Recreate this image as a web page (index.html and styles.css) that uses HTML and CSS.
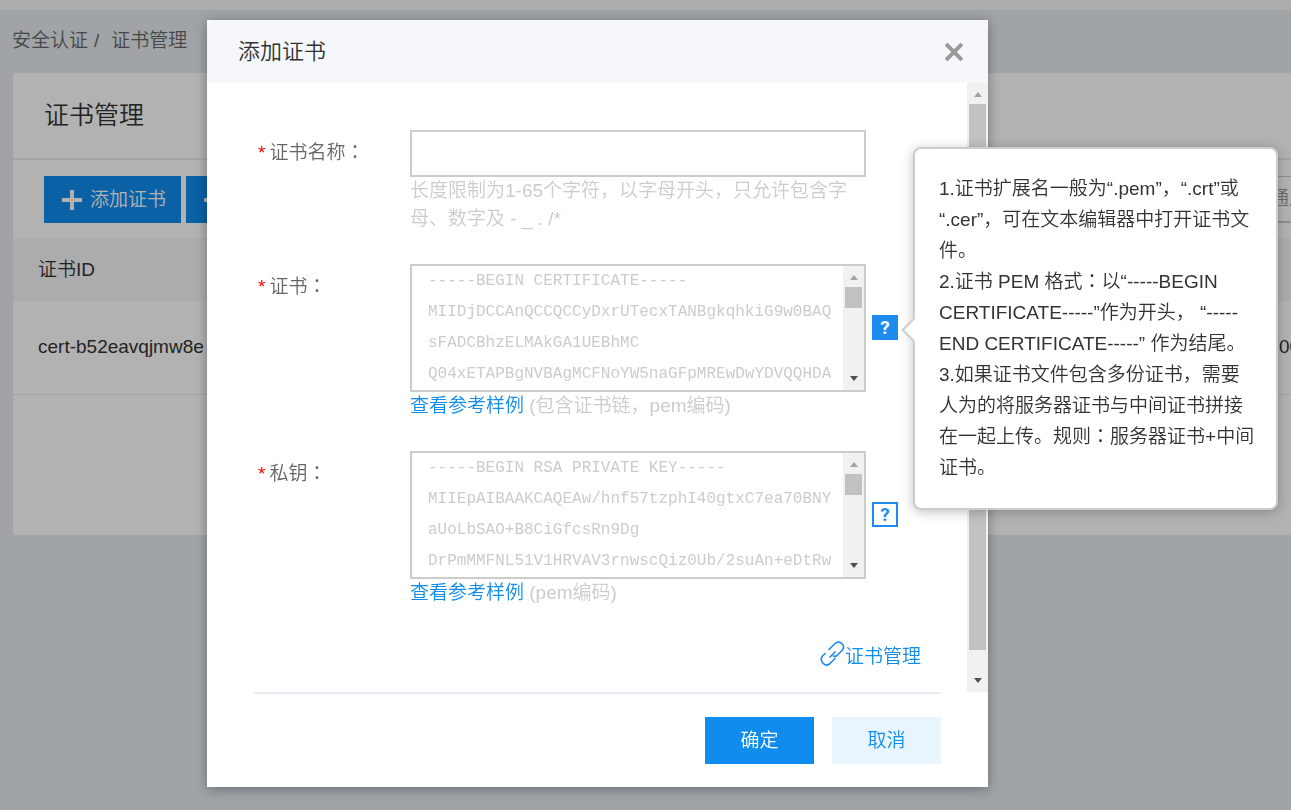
FILE: index.html
```html
<!DOCTYPE html>
<html lang="zh-CN">
<head>
<meta charset="utf-8">
<title>证书管理</title>
<link rel="stylesheet" href="styles.css">
</head>
<body>
<div class="page">
  <div class="topbar"></div>
  <nav class="crumbs"><span>安全认证</span><span>/</span><span>证书管理</span></nav>
  <main class="card">
    <h1 class="card-title">证书管理</h1>
    <div class="toolbar">
      <button class="tool-btn" type="button"><svg width="20" height="20" viewBox="0 0 20 20"><path d="M0 10H20M10 0V20"/></svg>添加证书</button>
      <button class="tool-btn" type="button"><svg width="20" height="20" viewBox="0 0 20 20"><path d="M0 10H20M10 0V20"/></svg></button>
      <button class="filter" type="button">通用</button>
    </div>
    <table class="certs">
      <thead><tr><th>证书ID</th><th class="last"></th></tr></thead>
      <tbody><tr><td>cert-b52eavqjmw8e</td><td class="last">00</td></tr></tbody>
    </table>
  </main>
</div>

<div class="overlay">
  <section class="dialog" role="dialog" aria-labelledby="dialog-title">
    <header class="dialog-head">
      <h2 id="dialog-title">添加证书</h2>
      <button class="close" type="button" aria-label="关闭"><svg width="18" height="18" viewBox="0 0 18 18"><path d="M1 1L17 17M17 1L1 17"/></svg></button>
    </header>
    <div class="dialog-body">
      <form class="form">
        <div class="row">
          <label for="cert-name"><i>*</i>证书名称<span lang="zh-TW">：</span></label>
          <div class="field">
            <input id="cert-name" class="text" type="text">
            <p class="hint name-hint">长度限制为1-65个字符，以字母开头，只允许包含字母、数字及 - _ . /*</p>
          </div>
        </div>
        <div class="row">
          <label for="cert-body"><i>*</i>证书<span lang="zh-TW">：</span></label>
          <div class="field">
            <div class="area">
              <textarea id="cert-body" placeholder="-----BEGIN CERTIFICATE-----
MIIDjDCCAnQCCQCCyDxrUTecxTANBgkqhkiG9w0BAQ
sFADCBhzELMAkGA1UEBhMC
Q04xETAPBgNVBAgMCFNoYW5naGFpMREwDwYDVQQHDA"></textarea>
              <div class="bar"><span class="up"></span><span class="thumb"></span><span class="down"></span></div>
            </div>
            <p class="hint"><a href="#">查看参考样例</a> (包含证书链，pem编码)</p>
          </div>
          <div class="help-wrap">
            <button class="help active" type="button">?</button>
            <div class="tip" role="tooltip">
              <p>1.证书扩展名一般为“.pem”，“.crt”或“.cer”，可在文本编辑器中打开证书文件。</p>
              <p>2.证书 PEM 格式<span lang="zh-TW">：</span>以“-----BEGIN<br>CERTIFICATE-----”作为开头， “-----<br>END CERTIFICATE-----” 作为结尾。</p>
              <p>3.如果证书文件包含多份证书，需要人为的将服务器证书与中间证书拼接在一起上传。规则<span lang="zh-TW">：</span>服务器证书+中间证书。</p>
            </div>
          </div>
        </div>
        <div class="row">
          <label for="cert-key"><i>*</i>私钥<span lang="zh-TW">：</span></label>
          <div class="field">
            <div class="area">
              <textarea id="cert-key" placeholder="-----BEGIN RSA PRIVATE KEY-----
MIIEpAIBAAKCAQEAw/hnf57tzphI40gtxC7ea70BNY
aUoLbSAO+B8CiGfcsRn9Dg
DrPmMMFNL51V1HRVAV3rnwscQiz0Ub/2suAn+eDtRw"></textarea>
              <div class="bar"><span class="up"></span><span class="thumb"></span><span class="down"></span></div>
            </div>
            <p class="hint"><a href="#">查看参考样例</a> (pem编码)</p>
          </div>
          <div class="help-wrap"><button class="help" type="button">?</button></div>
        </div>
        <a class="manage" href="#"><svg width="25" height="26" viewBox="0 0 25 26"><path d="M8.500 9L15 2.500C19 -1 26 3.500 22.500 9L17 14.500Q15 16 13 14.800M5.500 12L2.500 15C-1 19.500 4.500 26.500 9.500 23L15.500 17M9.500 16.500L15.500 10.500"/></svg>证书管理</a>
      </form>
      <div class="bar main-bar"><span class="up"></span><span class="thumb"></span><span class="down"></span></div>
    </div>
    <footer class="dialog-foot">
      <button class="ok" type="button">确定</button>
      <button class="cancel" type="button">取消</button>
    </footer>
  </section>
</div>
</body>
</html>
```
FILE: styles.css
```css
* { box-sizing: border-box; }
body, h1, h2, p { margin: 0; }
body {
  font: 350 19px/28px "Liberation Sans", "Noto Sans CJK SC", sans-serif;
  color: #333;
  background: #e5ebef;
  overflow: hidden;
}
button, input, textarea { font: inherit; margin: 0; }
button { border: 0; padding: 0; cursor: pointer; }
a { color: #108cee; text-decoration: none; }

.page { min-height: 100vh; }
.topbar { height: 10px; background: #f7f7f7; }
.crumbs { display: flex; gap: 6px; padding: 17px 12px 18px; color: #666; }
.crumbs span:last-child { padding-left: 6px; }
.card { margin-left: 13px; min-height: 462px; background: #fff; }
.card-title {
  padding: 24px 31px;
  border-bottom: 2px solid #ebebeb;
  font-size: 25px;
  line-height: 37px;
  font-weight: 350;
}
.toolbar { display: flex; gap: 5px; padding: 16px 0 15px 31px; }
.tool-btn {
  display: flex;
  align-items: center;
  gap: 8px;
  height: 47px;
  padding: 0 15px 0 18px;
  background: #108cee;
  color: #fff;
}
.tool-btn svg { stroke: #fff; stroke-width: 4; }
.filter {
  width: 44px;
  margin-left: auto;
  padding-left: 23px;
  border: 1px solid #ccc;
  border-width: 1px 0 2px;
  background: #fff;
  color: #999;
  text-align: left;
  white-space: nowrap;
  overflow: hidden;
}
.certs { width: 100%; table-layout: fixed; border-collapse: collapse; text-align: left; }
.certs th { height: 63px; padding: 0 25px; background: #f6f7fb; font-weight: 350; }
.certs td { height: 93px; padding: 0 25px; border-bottom: 1px solid #e6e8f2; }
.certs .last { width: 12px; padding: 0; }

.overlay {
  position: fixed;
  inset: 0;
  padding: 20px 303px 0 207px;
  background: rgba(0, 0, 0, .3);
}
.dialog { background: #fff; box-shadow: 0 2px 12px rgba(0, 0, 0, .35); }
.dialog-head {
  display: flex;
  align-items: center;
  justify-content: space-between;
  height: 63px;
  padding: 0 25px 0 31px;
  background: #f5f7fb;
}
.dialog-head h2 { font-size: 22px; font-weight: 350; }
.close { display: flex; background: none; }
.close svg { stroke: #999; stroke-width: 4; }
.dialog-body { display: flex; height: 609px; }
.form {
  flex: 1;
  display: flex;
  flex-direction: column;
  padding: 47px 46px 0 51px;
}
.row { display: flex; margin-bottom: 31px; }
.row label { width: 152px; padding-top: 9px; color: #666; }
.row i { margin-right: 4px; color: #f00; font-style: normal; }
.field { width: 456px; }
.text {
  display: block;
  width: 100%;
  height: 47px;
  padding: 0 16px;
  border: 2px solid #ccc;
}
.hint { color: #ccc; }
.name-hint { padding-right: 6px; }
.area { display: flex; height: 128px; border: 2px solid #ccc; }
.area textarea {
  flex: 1;
  min-width: 0;
  padding: 0 0 0 16px;
  border: 0;
  background: #fff;
  resize: none;
  overflow: hidden;
  font: 16px/31px "Liberation Mono", monospace;
}
.area textarea::placeholder { color: #ccc; opacity: 1; }
.bar {
  display: flex;
  flex-direction: column;
  width: 21px;
  padding: 9px 2px;
  background: #f1f1f1;
}
.bar .up, .bar .down {
  width: 0;
  margin: 0 auto;
  border: 4px solid transparent;
}
.bar .up { border-top: 0; border-bottom: 5px solid #a3a3a3; }
.bar .down { border-bottom: 0; border-top: 5px solid #505050; margin-top: auto; }
.bar .thumb { height: 21px; margin-top: 7px; background: #c1c1c1; }
.main-bar .thumb { height: 546px; }
.help-wrap { position: relative; margin: 51px 0 0 6px; height: 25px; }
.help {
  display: block;
  width: 26px;
  height: 25px;
  border: 2px solid #1e8cee;
  background: #fff;
  color: #1e8cee;
  font-family: Roboto, sans-serif;
  font-weight: 700;
  line-height: 20px;
}
.help.active { background: #1e8cee; color: #fff; }
.tip {
  position: absolute;
  top: -168px;
  left: 41px;
  width: 365px;
  padding: 24px 20px 25px 24px;
  border: 2px solid #ccc;
  border-radius: 8px;
  background: #fff;
  box-shadow: 0 2px 12px rgba(0, 0, 0, .25);
  line-height: 31px;
}
.tip::before {
  content: "";
  position: absolute;
  top: 172px;
  left: -10px;
  width: 16px;
  height: 16px;
  border: solid #ccc;
  border-width: 0 0 2px 2px;
  background: #fff;
  transform: rotate(45deg);
}
.manage { display: flex; align-items: center; margin: 3px 0 0 auto; }
.manage svg { fill: none; stroke: #1e8cee; stroke-width: 1.6; margin-bottom: 5px; }
.dialog-foot {
  display: flex;
  justify-content: flex-end;
  gap: 18px;
  margin: 0 47px;
  padding: 23px 0;
  border-top: 2px solid #e8edfa;
}
.dialog-foot button { width: 109px; height: 47px; }
.ok { background: #108cee; color: #fff; }
.cancel { background: #e8f4fe; color: #108cee; }
```
